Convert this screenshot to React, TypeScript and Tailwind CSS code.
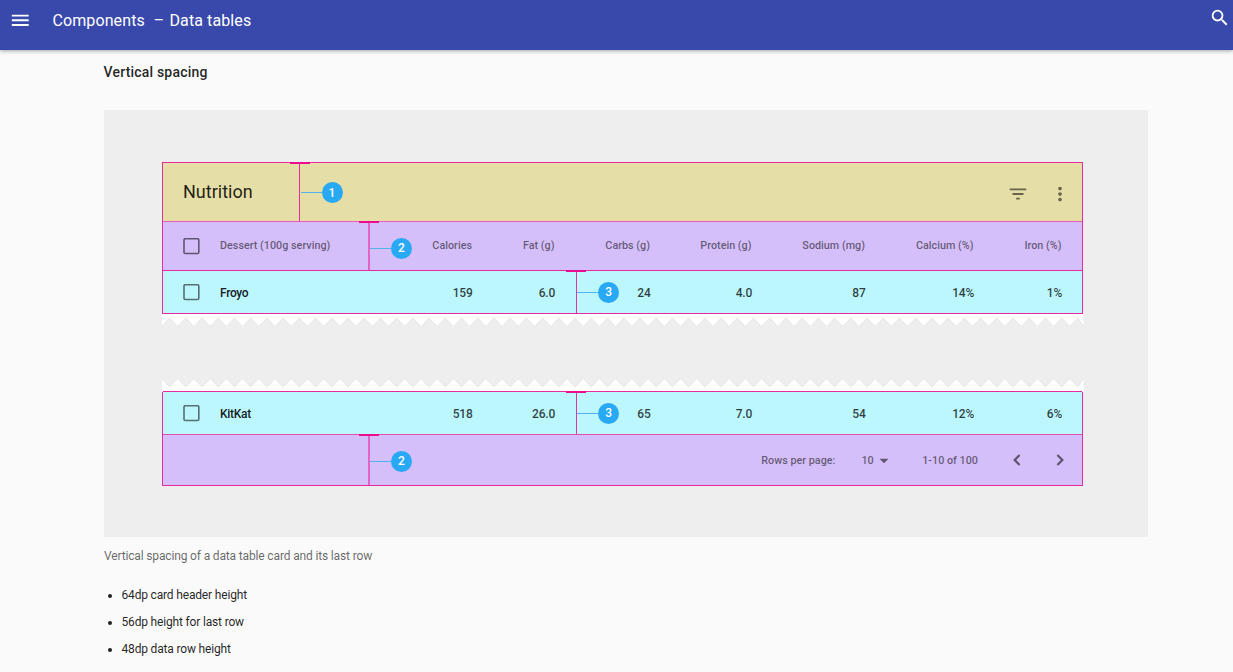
import React from "react";

const GRID =
  "grid grid-cols-[57px_192px_60px_82.5px_95.5px_101.5px_113.5px_108.5px_88px] items-center";

const HEADERS = ["Calories", "Fat (g)", "Carbs (g)", "Protein (g)", "Sodium (mg)", "Calcium (%)", "Iron (%)"];

function Checkbox() {
  return (
    <svg className="ml-[20px] block text-black/55" width="17" height="17" viewBox="0 0 17 17" fill="none">
      <rect x="1" y="0.7" width="14.8" height="14.8" rx="1.2" stroke="currentColor" strokeWidth="1.6" />
    </svg>
  );
}

function Marker({ n, place, circle, line }: { n: number; place: string; circle: string; line: string }) {
  return (
    <div className={"absolute flex w-[54px] " + place}>
      <div className="flex w-[20px] shrink-0 flex-col">
        <div className="h-[2px] bg-[#ec0c92]" />
        <div className={"flex-1 " + line} />
      </div>
      <div className={"absolute flex items-center " + circle}>
        <div className="h-px w-[21px] bg-[#4fb3ee]" />
        <div className="flex h-[21px] w-[21px] items-center justify-center rounded-full bg-[#29a8f4] text-[12px] font-medium leading-none text-white">
          {n}
        </div>
      </div>
    </div>
  );
}

function DataRow({ name, values }: { name: string; values: string[] }) {
  return (
    <div className={GRID + " relative h-[43px] border-t border-[#e62a9f] bg-[#bcf7fe] text-[12px] font-medium tracking-[-0.15px] text-black/75"}>
      <Checkbox />
      <span className="pt-[2px] tracking-[-0.3px] text-black/90">{name}</span>
      {values.map((v, i) => (
        <span key={i} className="-mr-[0.7px] pt-[2px] text-right">
          {v}
        </span>
      ))}
      <Marker n={3} place="left-[403px] -top-px h-[43px]" circle="left-[11px] top-[11.5px]" line="ml-[10px] w-[1px] bg-[#e0359f]" />
    </div>
  );
}

function zigzag(up: boolean) {
  const w = 921.5;
  const half = 8.11;
  const pts: string[] = [];
  for (let i = 0; i * half <= w + half; i++) {
    const x = Math.min(w, i * half - 0.5);
    const tip = i % 2 === 0;
    const y = up ? (tip ? 0.5 : 9) : tip ? 12.5 : 4;
    pts.push(`${x.toFixed(1)},${y}`);
  }
  return pts.join(" ");
}

function TornEdge({ up = false }: { up?: boolean }) {
  const line = zigzag(up);
  const base = up ? 14 : 0;
  return (
    <svg width="922" height="14" viewBox="0 0 922 14" className="block">
      <polygon points={`0,${base} ${line} 921.5,${base}`} fill="#ffffff" />
      <polyline points={line} fill="none" stroke="#e0e0e0" strokeWidth="0.7" />
    </svg>
  );
}

export default function App() {
  return (
    <div className="h-[672px] overflow-hidden bg-[#fafafa] font-['Roboto',sans-serif] text-black/87">
      <header className="relative flex h-[50px] items-start justify-between bg-[#3949ab] pl-[9px] pr-[2.5px] text-white shadow-[0_1px_4px_rgba(0,0,0,0.35)]">
        <div className="flex items-start pt-[9px]">
          <svg width="22.5" height="22.5" viewBox="0 0 24 24" fill="currentColor">
            <path d="M3 18h18v-2H3v2zm0-5h18v-2H3v2zm0-7v2h18V6H3z" />
          </svg>
          <h1 className="ml-[21px] mt-px flex text-[16px] leading-[22px] tracking-[0.1px]">
            <span className="w-[101px]">Components</span>
            <span className="w-[16px]">–</span>
            <span>Data tables</span>
          </h1>
        </div>
        <svg className="mt-[7.3px]" width="21.6" height="21.6" viewBox="0 0 24 24" fill="currentColor">
          <path d="M15.5 14h-.79l-.28-.27A6.471 6.471 0 0 0 16 9.5 6.5 6.5 0 1 0 9.5 16c1.61 0 3.09-.59 4.23-1.57l.27.28v.79l5 4.99L20.49 19l-4.99-5zm-6 0C7.01 14 5 11.99 5 9.5S7.01 5 9.5 5 14 7.01 14 9.5 11.99 14 9.5 14z" />
        </svg>
      </header>

      <main className="pl-[104px]">
        <h2 className="-ml-[0.5px] pt-[12px] text-[14px] font-medium leading-[20px] tracking-[0.2px]">Vertical spacing</h2>

        <figure className="mt-[28px] h-[427px] w-[1044px] bg-[#eeeeee] pl-[58px] pt-[52px]">
          <section className="w-[921px]">
            <div className="border-x border-b border-[#e62a9f]">
              <div className="relative flex h-[59px] items-center border-t border-[#e62a9f] bg-[#e5dea6] pl-[20px] pr-[11px]">
                <h3 className="flex-1 text-[18px] leading-[24px]">Nutrition</h3>
                <div className="flex items-center gap-[20px] pt-[4px] text-black/55">
                  <svg width="22" height="22" viewBox="0 0 24 24" fill="currentColor">
                    <path d="M10 18h4v-2h-4v2zM3 6v2h18V6H3zm3 7h12v-2H6v2z" />
                  </svg>
                  <svg width="22" height="22" viewBox="0 0 24 24" fill="currentColor">
                    <path d="M12 8c1.1 0 2-.9 2-2s-.9-2-2-2-2 .9-2 2 .9 2 2 2zm0 2c-1.1 0-2 .9-2 2s.9 2 2 2 2-.9 2-2-.9-2-2-2zm0 6c-1.1 0-2 .9-2 2s.9 2 2 2 2-.9 2-2-.9-2-2-2z" />
                  </svg>
                </div>
                <Marker n={1} place="left-[127px] -top-px h-[59px]" circle="left-[10.5px] top-[20px]" line="ml-[9px] w-px bg-[#ec2b9f]" />
              </div>

              <div className={GRID + " relative h-[49px] border-t border-[#e85bb8] bg-[#d5bffa] text-[10.8px] font-medium text-black/55"}>
                <Checkbox />
                <span className="pt-px">Dessert (100g serving)</span>
                {HEADERS.map((h) => (
                  <span key={h} className="pt-px text-right">
                    {h}
                  </span>
                ))}
                <Marker n={2} place="left-[196px] -top-px h-[49px]" circle="left-[11px] top-[16.5px]" line="ml-[9px] w-[2px] bg-[#e264c8]" />
              </div>

              <DataRow name="Froyo" values={["159", "6.0", "24", "4.0", "87", "14%", "1%"]} />
            </div>
            <TornEdge />
          </section>

          <section className="mt-[50px] w-[921px]">
            <TornEdge up />
            <div className="-mt-px border-x border-b border-[#e62a9f]">
              <DataRow name="KitKat" values={["518", "26.0", "65", "7.0", "54", "12%", "6%"]} />
              <div className="relative flex h-[51px] items-center justify-end border-t border-[#e04fae] bg-[#d5bffa] pr-[11px] text-[10.8px] font-medium text-black/55">
                <span className="pt-[2px]">Rows per page:</span>
                <span className="ml-[26px] pt-[2px]">10</span>
                <svg className="ml-[5px] mt-[2px]" width="10" height="6" viewBox="0 0 10 6" fill="currentColor">
                  <path d="M0.5 0.7h9L5 5.3z" />
                </svg>
                <span className="ml-[33.5px] pt-[2px]">1-10 of 100</span>
                <svg className="ml-[28px]" width="22" height="22" viewBox="0 0 24 24" fill="currentColor">
                  <path stroke="currentColor" strokeWidth="0.4" d="M15.41 7.41 14 6l-6 6 6 6 1.41-1.41L10.83 12z" />
                </svg>
                <svg className="ml-[21px]" width="22" height="22" viewBox="0 0 24 24" fill="currentColor">
                  <path stroke="currentColor" strokeWidth="0.4" d="M10 6 8.59 7.41 13.17 12l-4.58 4.59L10 18l6-6z" />
                </svg>
                <Marker n={2} place="left-[196px] -top-px h-[51px]" circle="left-[11px] top-[16.5px]" line="ml-[9px] w-[2px] bg-[#e264c8]" />
              </div>
            </div>
          </section>
        </figure>

        <p className="pt-[10px] text-[12px] leading-[18px] tracking-[-0.15px] text-black/60">
          Vertical spacing of a data table card and its last row
        </p>
        <ul className="mt-[17px] text-[12px] leading-[27px] tracking-[-0.17px]">
          {["64dp card header height", "56dp height for last row", "48dp data row height"].map((t) => (
            <li key={t} className="flex items-center">
              <span className="ml-[4px] mr-[9.5px] mt-px h-[4px] w-[4px] rounded-full bg-black/87" />
              {t}
            </li>
          ))}
        </ul>
      </main>
    </div>
  );
}
